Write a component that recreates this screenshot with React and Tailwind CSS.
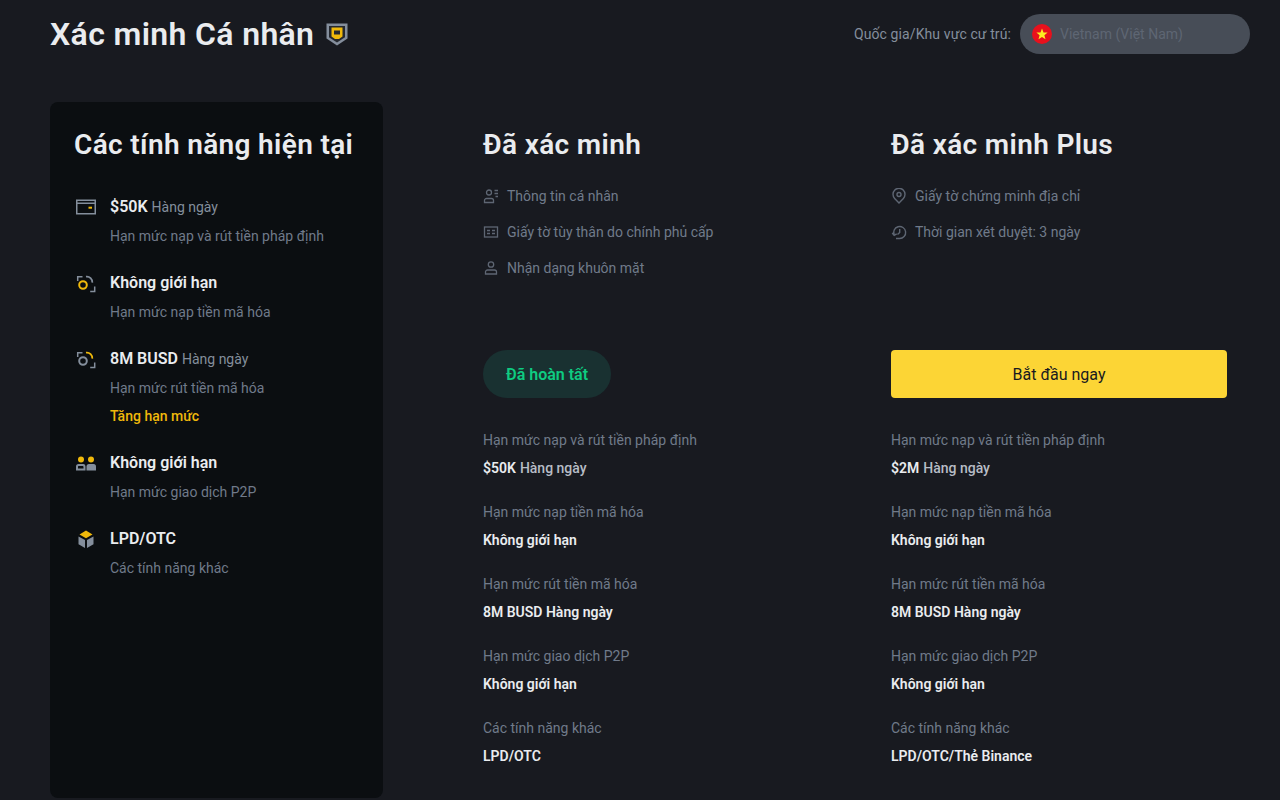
import React from 'react';

function Wallet() {
  return (
    <svg width="20" height="20" viewBox="0 0 20 20" fill="none">
      <path d="M.75 3.250h18.500v13.500H.75z" stroke="#848e9c" strokeWidth="1.500" />
      <path d="M1 5.500h18V7H1z" fill="#848e9c" />
      <rect x="12.500" y="9.700" width="3.500" height="2" fill="#f0b90b" />
    </svg>
  );
}

function Coins({ top }) {
  const gold = '#f0b90b';
  const grey = '#848e9c';
  return (
    <svg width="20" height="20" viewBox="0 0 20 20" fill="none" strokeWidth="1.500">
      <path d="M6.500 3.700H1.700V8" stroke={grey} />
      <path d="M18.700 13.500v5h-4.500" stroke={grey} />
      <circle cx="7" cy="12" r="3.800" stroke={top ? grey : gold} strokeWidth="2" />
      <path d="M10 3.700a5.500 5.500 0 0 1 6.300 6" stroke={top ? gold : grey} strokeWidth="1.800" />
    </svg>
  );
}

function People() {
  return (
    <svg width="20" height="20" viewBox="0 0 20 20">
      <g transform="translate(0 2)">
        <circle cx="5" cy="4.500" r="3" fill="#f0b90b" />
        <circle cx="15" cy="4.500" r="3" fill="#f0b90b" />
        <path d="M0 15.500v-4A2.500 2.500 0 0 1 2.500 9h5A2.500 2.500 0 0 1 9.500 11.500v4H0zm2-2h5.500v-1.500c0-.6-.4-1-1-1h-3.500c-.8 0-1 .4-1 1v1.500z" fill="#848e9c" fillRule="evenodd" />
        <path d="M10.500 15.500v-4A2.500 2.500 0 0 1 13 9h4.500a2.500 2.500 0 0 1 2.500 2.500v4h-9.500z" fill="#848e9c" />
      </g>
    </svg>
  );
}

function Box() {
  return (
    <svg width="20" height="20" viewBox="0 0 20 20">
      <path d="M10 1.500l6.500 4-6.500 3.700-6.500-3.700 6.500-4z" fill="#f0b90b" />
      <path d="M2.500 7.500l6.500 3.400V19l-6.500-3.700V7.500z" fill="#848e9c" />
      <path d="M17.500 7.500L11 10.900V19l6.500-3.700V7.500z" fill="#848e9c" />
    </svg>
  );
}

function PersonList() {
  return (
    <svg width="16" height="16" viewBox="0 0 16 16" fill="none" stroke="#5e6673" strokeWidth="1.300">
      <circle cx="6" cy="4.500" r="2.500" />
      <path d="M1.500 14.500v-2a2 2 0 0 1 2-2h5a2 2 0 0 1 2 2v2h-9z" />
      <path d="M11.500 2.500H15M11.500 5.500H15M12.500 8.500H15" />
    </svg>
  );
}

function IdCard() {
  return (
    <svg width="16" height="16" viewBox="0 0 16 16" fill="none" stroke="#5e6673" strokeWidth="1.300">
      <rect x="1.500" y="3" width="13" height="10" />
      <path d="M4 6.500h3M4 9.500h3M9 6.500h3M9 9.500h3" />
    </svg>
  );
}

function Person() {
  return (
    <svg width="16" height="16" viewBox="0 0 16 16" fill="none" stroke="#5e6673" strokeWidth="1.300">
      <circle cx="8" cy="4.500" r="2.700" />
      <path d="M2.500 14v-2a2 2 0 0 1 2-2h7a2 2 0 0 1 2 2v2h-11z" />
    </svg>
  );
}

function Pin() {
  return (
    <svg width="16" height="16" viewBox="0 0 16 16" fill="none" stroke="#5e6673" strokeWidth="1.400">
      <path d="M8 15l-4.400-4.600a6 6 0 1 1 8.800 0L8 15z" />
      <circle cx="8" cy="6.500" r="2" />
    </svg>
  );
}

function Clock() {
  return (
    <svg width="16" height="16" viewBox="0 0 16 16" fill="none" stroke="#5e6673" strokeWidth="1.400">
      <path d="M3.200 11A6 6 0 1 1 8.500 14.500H5" />
      <path d="M8.700 5v3.500L6.500 10.500" />
      <path d="M1.200 9l2 2.300L5.700 9.800" />
    </svg>
  );
}

function Shield() {
  return (
    <svg width="22" height="24" viewBox="0 0 22 24" fill="none">
      <path d="M.5 1.500h21v15L11 23.500.5 16.500v-15z" fill="#848e9c" />
      <path d="M3 4h16v11.200L11 20.500 3 15.200V4z" fill="#252930" />
      <path d="M5.500 5.500h11v9l-3.500 2.500H9l-3.500-2.500v-9z" fill="#f0b90b" />
      <path d="M8 8.500h6v4H8z" fill="#252930" />
    </svg>
  );
}

function Flag() {
  return (
    <svg width="20" height="20" viewBox="0 0 20 20" className="shrink-0">
      <circle cx="10" cy="10" r="10" fill="#e8101c" />
      <path d="M10 4.500l1.500 3.900 4.100.2-3.200 2.600 1.100 4-3.500-2.300-3.500 2.300 1.100-4-3.200-2.600 4.100-.2z" fill="#fcee21" />
    </svg>
  );
}

function Feature({ icon, title, note, desc, link }) {
  return (
    <div className="flex mb-[18px]">
      <div className="w-5 h-5 mt-[5px] ml-[2px] mr-[14px] shrink-0">{icon}</div>
      <div>
        <div className="h-7 leading-[30px] text-base font-semibold text-[#eaecef]">
          {title}
          {note && <span className="ml-1 text-sm font-normal text-[#848e9c]">{note}</span>}
        </div>
        <div className="h-7 leading-7 mt-[2px] text-sm text-[#707a8a]">{desc}</div>
        {link && <div className="h-7 leading-7 text-sm font-medium text-[#f0b90b]">{link}</div>}
      </div>
    </div>
  );
}

function Req({ icon, text }) {
  return (
    <div className="flex items-center h-9 text-sm text-[#707a8a]">
      <div className="w-4 h-4 mr-2 shrink-0">{icon}</div>
      {text}
    </div>
  );
}

function Limit({ label, value, note }) {
  return (
    <div className="mb-4">
      <div className="h-7 leading-7 text-sm text-[#707a8a]">{label}</div>
      <div className="h-7 leading-7 text-sm font-semibold text-[#eaecef]">
        {value}
        {note && <span className="ml-1 font-medium text-[#b7bdc6]">{note}</span>}
      </div>
    </div>
  );
}

export default function App() {
  return (
    <div className="w-[1280px] h-[800px] overflow-hidden bg-[#181a20] font-['Roboto',sans-serif]">
      <header className="flex items-center justify-between h-[68px] pl-[50px] pr-[30px]">
        <div className="flex items-center">
          <h1 className="text-[32px] leading-10 font-semibold tracking-[0.35px] text-[#eaecef]">Xác minh Cá nhân</h1>
          <div className="ml-3"><Shield /></div>
        </div>
        <div className="flex items-center">
          <span className="mr-[9px] text-sm tracking-[0.1px] text-[#848e9c]">Quốc gia/Khu vực cư trú:</span>
          <div className="flex items-center w-[230px] h-10 pl-3 rounded-full bg-[#474d57]">
            <Flag />
            <span className="ml-2 text-sm text-[#5e6673]">Vietnam (Việt Nam)</span>
          </div>
        </div>
      </header>

      <main className="flex mt-[34px] pl-[50px]">
        <aside className="w-[333px] h-[696px] mr-[100px] p-6 rounded-lg bg-[#0b0e11]">
          <h2 className="h-9 leading-[38px] text-[28px] font-semibold tracking-[0.35px] text-[#eaecef] mb-[30px]">Các tính năng hiện tại</h2>
          <Feature icon={<Wallet />} title="$50K" note="Hàng ngày" desc="Hạn mức nạp và rút tiền pháp định" />
          <Feature icon={<Coins />} title="Không giới hạn" desc="Hạn mức nạp tiền mã hóa" />
          <Feature icon={<Coins top />} title="8M BUSD" note="Hàng ngày" desc="Hạn mức rút tiền mã hóa" link="Tăng hạn mức" />
          <Feature icon={<People />} title="Không giới hạn" desc="Hạn mức giao dịch P2P" />
          <Feature icon={<Box />} title="LPD/OTC" desc="Các tính năng khác" />
        </aside>

        <section className="w-[336px] mr-[72px] pt-6">
          <h2 className="h-9 leading-[38px] text-[28px] font-semibold tracking-[0.35px] text-[#eaecef] mb-[16px]">Đã xác minh</h2>
          <div className="h-[172px]">
            <Req icon={<PersonList />} text="Thông tin cá nhân" />
            <Req icon={<IdCard />} text="Giấy tờ tùy thân do chính phủ cấp" />
            <Req icon={<Person />} text="Nhận dạng khuôn mặt" />
          </div>
          <div className="flex items-center justify-center w-32 h-12 pt-[2px] mb-[28px] rounded-full bg-[#193131] text-base font-semibold text-[#0ecb81]">Đã hoàn tất</div>
          <Limit label="Hạn mức nạp và rút tiền pháp định" value="$50K" note="Hàng ngày" />
          <Limit label="Hạn mức nạp tiền mã hóa" value="Không giới hạn" />
          <Limit label="Hạn mức rút tiền mã hóa" value="8M BUSD Hàng ngày" />
          <Limit label="Hạn mức giao dịch P2P" value="Không giới hạn" />
          <Limit label="Các tính năng khác" value="LPD/OTC" />
        </section>

        <section className="w-[336px] pt-6">
          <h2 className="h-9 leading-[38px] text-[28px] font-semibold tracking-[0.35px] text-[#eaecef] mb-[16px]">Đã xác minh Plus</h2>
          <div className="h-[172px]">
            <Req icon={<Pin />} text="Giấy tờ chứng minh địa chỉ" />
            <Req icon={<Clock />} text="Thời gian xét duyệt: 3 ngày" />
          </div>
          <div className="flex items-center justify-center w-full h-12 pt-[2px] mb-[28px] rounded bg-[#fcd535] text-base font-normal text-[#181a20]">Bắt đầu ngay</div>
          <Limit label="Hạn mức nạp và rút tiền pháp định" value="$2M" note="Hàng ngày" />
          <Limit label="Hạn mức nạp tiền mã hóa" value="Không giới hạn" />
          <Limit label="Hạn mức rút tiền mã hóa" value="8M BUSD Hàng ngày" />
          <Limit label="Hạn mức giao dịch P2P" value="Không giới hạn" />
          <Limit label="Các tính năng khác" value="LPD/OTC/Thẻ Binance" />
        </section>
      </main>
    </div>
  );
}
